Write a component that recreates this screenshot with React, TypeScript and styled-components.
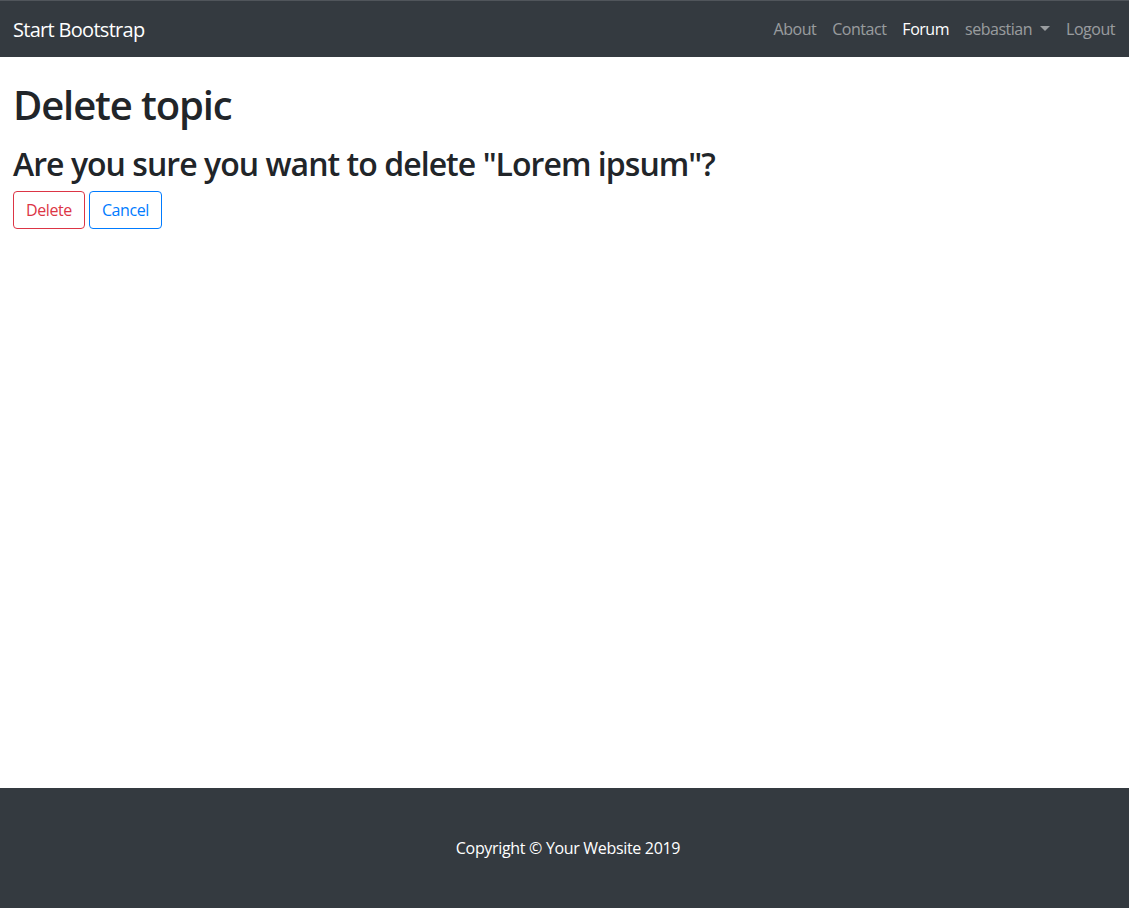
import React from "react";
import styled, { createGlobalStyle } from "styled-components";

const GlobalStyle = createGlobalStyle`
  html, body { margin: 0; padding: 0; }
  body {
    font-family: "Segoe UI", "Open Sans", "Noto Sans", sans-serif;
    font-size: 16px;
    line-height: 1.5;
    color: #212529;
    background: #fff;
    letter-spacing: -0.02em;
  }
  *, *::before, *::after { box-sizing: border-box; }
`;

const Page = styled.div`
  min-height: 100vh;
  display: flex;
  flex-direction: column;
`;

const Navbar = styled.nav`
  height: 57px;
  background: #343a40;
  border-top: 1px solid #50555b;
  display: flex;
  align-items: center;
  justify-content: space-between;
  padding: 0 6px 0 13px;
`;

const Brand = styled.a`
  font-size: 20px;
  line-height: 30px;
  color: #fff;
  text-decoration: none;
  margin-top: 1px;
  letter-spacing: -0.035em;
`;

const NavList = styled.ul`
  display: flex;
  list-style: none;
  margin: 0;
  padding: 0;
`;

const NavLink = styled.a<{ $active?: boolean }>`
  display: flex;
  align-items: center;
  padding: 8px;
  font-size: 16px;
  line-height: 24px;
  letter-spacing: -0.03em;
  color: ${(p) => (p.$active ? "#fff" : "rgba(255,255,255,0.5)")};
  text-decoration: none;
`;

const Caret = styled.span`
  display: inline-block;
  margin-left: 8px;
  width: 0;
  height: 0;
  border-top: 5px solid rgba(255, 255, 255, 0.5);
  border-left: 5px solid transparent;
  border-right: 5px solid transparent;
  margin-top: -2px;
`;

const Main = styled.main`
  flex: 1;
  padding: 24px 13px 0;
`;

const Title = styled.h1`
  font-size: 40px;
  font-weight: 600;
  line-height: 1.2;
  letter-spacing: -0.028em;
  margin: 0 0 16px;
`;

const Question = styled.h2`
  font-size: 32px;
  font-weight: 600;
  line-height: 1.2;
  letter-spacing: -0.03em;
  margin: 0 0 8px;
`;

const Actions = styled.div`
  display: flex;
  gap: 4px;
`;

const OutlineButton = styled.button<{ $color: string }>`
  font-family: inherit;
  font-size: 16px;
  line-height: 24px;
  letter-spacing: -0.025em;
  padding: 6px 12px;
  border: 1px solid ${(p) => p.$color};
  color: ${(p) => p.$color};
  background: transparent;
  border-radius: 4px;
  cursor: pointer;
`;

const Footer = styled.footer`
  background: #343a40;
  padding: 48px 0 48px 7px;
`;

const FooterText = styled.p`
  margin: 0;
  text-align: center;
  color: #fff;
  line-height: 24px;
`;

export default function App() {
  return (
    <Page>
      <GlobalStyle />
      <Navbar>
        <Brand href="#">Start Bootstrap</Brand>
        <NavList>
          <li><NavLink href="#">About</NavLink></li>
          <li><NavLink href="#">Contact</NavLink></li>
          <li><NavLink href="#" $active>Forum</NavLink></li>
          <li><NavLink href="#">sebastian<Caret /></NavLink></li>
          <li><NavLink href="#">Logout</NavLink></li>
        </NavList>
      </Navbar>
      <Main>
        <Title>Delete topic</Title>
        <Question>Are you sure you want to delete "Lorem ipsum"?</Question>
        <Actions>
          <OutlineButton $color="#dc3545">Delete</OutlineButton>
          <OutlineButton $color="#007bff">Cancel</OutlineButton>
        </Actions>
      </Main>
      <Footer>
        <FooterText>Copyright © Your Website 2019</FooterText>
      </Footer>
    </Page>
  );
}
